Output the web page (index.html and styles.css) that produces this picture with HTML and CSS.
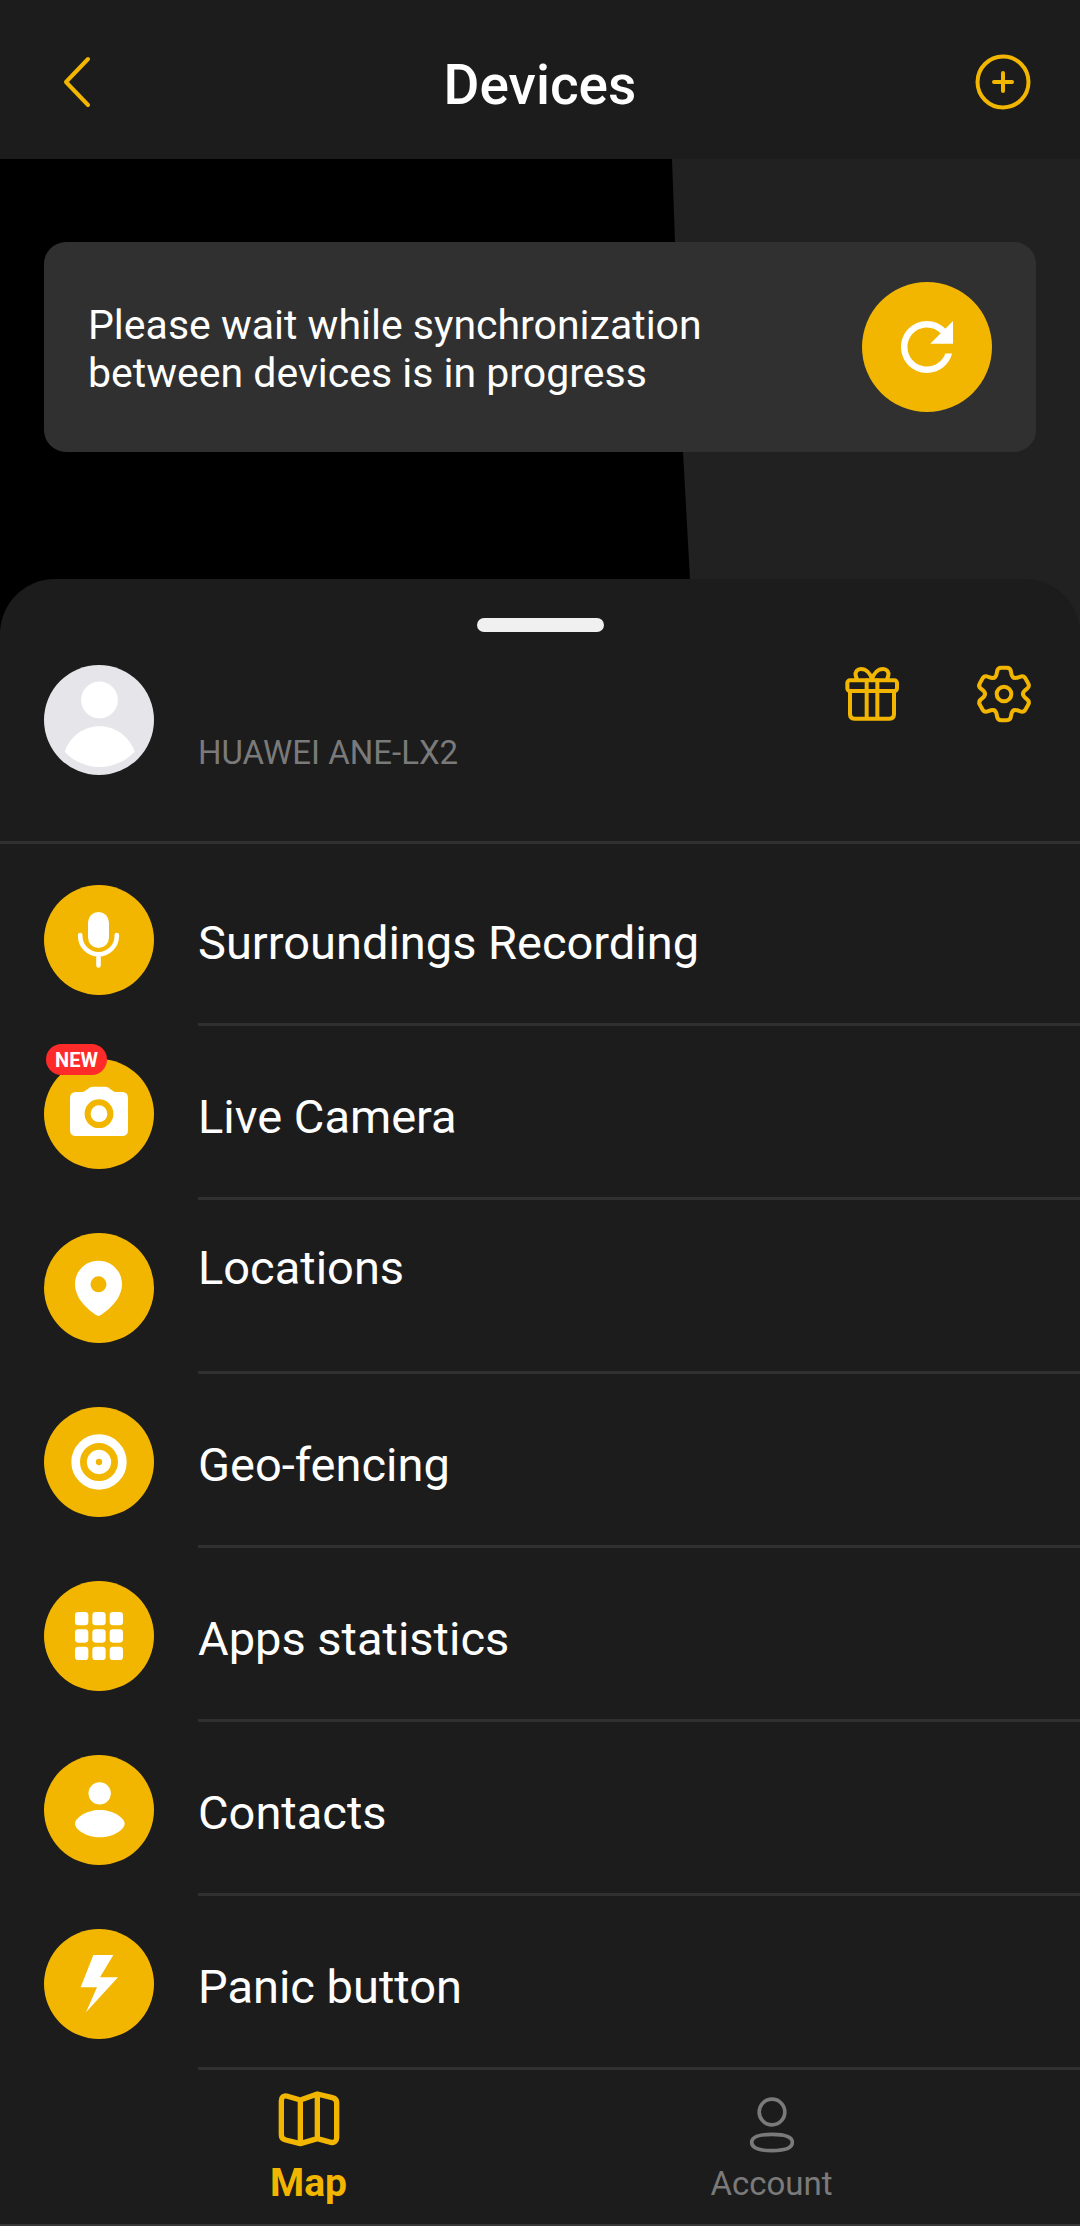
FILE: index.html
```html
<!DOCTYPE html>
<html lang="en">
<head>
  <meta charset="utf-8">
  <meta name="viewport" content="width=device-width, initial-scale=1">
  <title>Devices</title>
  <link rel="stylesheet" href="styles.css">
</head>
<body>
  <header class="topbar">
    <button class="icon-button" type="button" aria-label="Back">
      <svg class="topbar-icon" viewBox="0 0 60 60" aria-hidden="true">
        <path class="line" d="M43 7 L21 30 L43 53"/>
      </svg>
    </button>
    <h1 class="topbar-title">Devices</h1>
    <button class="icon-button" type="button" aria-label="Add device">
      <svg class="topbar-icon" viewBox="2 0 60 60" aria-hidden="true">
        <circle class="line" cx="30" cy="30" r="25.5"/>
        <path class="line" d="M30 21 V39 M21 30 H39"/>
      </svg>
    </button>
  </header>

  <main class="main">
    <section class="map">
      <svg class="map-tiles" viewBox="0 0 1080 475" preserveAspectRatio="none" aria-hidden="true">
        <path fill="#212121" d="M672 0 L675 83 L683 293 L690 420 L693 475 H1080 V0 Z"/>
      </svg>
      <div class="sync-card">
        <p class="sync-text">Please wait while synchronization between devices is in progress</p>
        <button class="sync-button" type="button" aria-label="Refresh">
          <svg class="sync-icon" viewBox="0 0 24 24" aria-hidden="true">
            <path fill="#fff" d="M17.65 6.35C16.2 4.9 14.21 4 12 4c-4.42 0-7.99 3.58-7.99 8s3.57 8 7.99 8c3.73 0 6.84-2.55 7.73-6h-2.08c-.82 2.33-3.04 4-5.65 4-3.31 0-6-2.69-6-6s2.69-6 6-6c1.66 0 3.14.69 4.22 1.78L13 11h7V4l-2.35 2.35z"/>
          </svg>
        </button>
      </div>
    </section>

    <section class="sheet">
      <div class="handle"></div>
      <div class="profile">
        <svg class="disc" viewBox="0 0 110 110" role="img" aria-label="Profile picture">
          <circle cx="55" cy="55" r="55" fill="#e5e5ea"/>
          <circle cx="55.5" cy="35" r="18.4" fill="#fff"/>
          <path fill="#fff" d="M20.7 86.7 C26 71 40 61.3 55.5 61.3 S85 71 90.7 86.7 C82 96 69 102 55.5 102 S29 96 20.7 86.7 Z"/>
        </svg>
        <p class="device-name">HUAWEI ANE-LX2</p>
        <div class="profile-actions">
          <button class="icon-button" type="button" aria-label="Gifts">
            <svg class="action-icon" viewBox="180 135 180 180" aria-hidden="true">
              <rect x="199" y="181" width="149" height="32" rx="8"/>
              <path d="M207 213 V283 Q207 296 220 296 H326 Q339 296 339 283 V213 M257 181 V296 M289 181 V296"/>
              <path d="M273 178 C268 160 255 147 240 147 C228 147 222 156 224 166 L228 179 M273 178 C278 160 291 147 306 147 C318 147 324 156 322 166 L318 179"/>
            </svg>
          </button>
          <button class="icon-button" type="button" aria-label="Settings">
            <svg class="action-icon" viewBox="-90 -87 180 180" aria-hidden="true">
              <defs>
                <path id="tooth" d="M-28.5 -49.4 C-22 -53 -22 -60 -21 -67 C-20 -75 -16 -79 -8 -79 L8 -79 C16 -79 20 -75 21 -67 C22 -60 22 -53 28.5 -49.4"/>
              </defs>
              <use href="#tooth"/>
              <use href="#tooth" transform="rotate(60)"/>
              <use href="#tooth" transform="rotate(120)"/>
              <use href="#tooth" transform="rotate(180)"/>
              <use href="#tooth" transform="rotate(240)"/>
              <use href="#tooth" transform="rotate(300)"/>
              <circle r="22"/>
            </svg>
          </button>
        </div>
      </div>

      <ul class="menu">
        <li>
          <a class="menu-item" href="#recording">
            <svg class="disc" viewBox="0 0 110 110" aria-hidden="true">
              <circle class="disc-fill" cx="55" cy="55" r="55"/>
              <rect x="44" y="27" width="21" height="36" rx="10.5" fill="#fff"/>
              <path d="M36.2 50 V51 A18.3 18.3 0 0 0 72.8 51 V50 M54.5 70 V80.5" fill="none" stroke="#fff" stroke-width="4.6" stroke-linecap="round"/>
            </svg>
            <span class="menu-label">Surroundings Recording</span>
          </a>
        </li>
        <li>
          <a class="menu-item" href="#camera">
            <span class="disc-wrap">
              <svg class="disc" viewBox="0 0 110 110" aria-hidden="true">
                <circle class="disc-fill" cx="55" cy="55" r="55"/>
                <path fill="#fff" d="M32 33 H38 C42 33 44 27.700 49 27.700 H61 C66 27.700 68 33 72 33 H78 Q84 33 84 39 V71 Q84 77 78 77 H32 Q26 77 26 71 V39 Q26 33 32 33 Z"/>
                <circle cx="55" cy="54.7" r="11.4" fill="none" stroke="#f2b600" stroke-width="6"/>
              </svg>
              <span class="badge">NEW</span>
            </span>
            <span class="menu-label">Live Camera</span>
          </a>
        </li>
        <li>
          <a class="menu-item menu-item-raised" href="#locations">
            <svg class="disc" viewBox="0 0 330 330" aria-hidden="true">
              <circle class="disc-fill" cx="165" cy="165" r="165"/>
              <path fill="#fff" d="M163.500 83 C124 83 93 114 93 153 C93 196 130 229 158 247 Q163.500 251 169 247 C197 229 234 196 234 153 C234 114 203 83 163.500 83 Z"/>
              <circle class="disc-fill" cx="163.500" cy="154" r="24"/>
            </svg>
            <span class="menu-label">Locations</span>
          </a>
        </li>
        <li>
          <a class="menu-item" href="#geofencing">
            <svg class="disc" viewBox="0 0 330 330" aria-hidden="true">
              <circle class="disc-fill" cx="165" cy="165" r="165"/>
              <circle cx="165" cy="165" r="70" fill="none" stroke="#fff" stroke-width="26"/>
              <circle cx="165" cy="165" r="23" fill="none" stroke="#fff" stroke-width="27"/>
            </svg>
            <span class="menu-label">Geo-fencing</span>
          </a>
        </li>
        <li>
          <a class="menu-item" href="#apps">
            <svg class="disc" viewBox="0 0 330 330" aria-hidden="true">
              <circle class="disc-fill" cx="165" cy="165" r="165"/>
              <g fill="#fff">
                <rect x="93" y="93" width="40" height="40" rx="10"/>
                <rect x="145" y="93" width="40" height="40" rx="10"/>
                <rect x="197" y="93" width="40" height="40" rx="10"/>
                <rect x="93" y="145" width="40" height="40" rx="10"/>
                <rect x="145" y="145" width="40" height="40" rx="10"/>
                <rect x="197" y="145" width="40" height="40" rx="10"/>
                <rect x="93" y="197" width="40" height="40" rx="10"/>
                <rect x="145" y="197" width="40" height="40" rx="10"/>
                <rect x="197" y="197" width="40" height="40" rx="10"/>
              </g>
            </svg>
            <span class="menu-label">Apps statistics</span>
          </a>
        </li>
        <li>
          <a class="menu-item" href="#contacts">
            <svg class="disc" viewBox="0 0 330 330" aria-hidden="true">
              <circle class="disc-fill" cx="165" cy="165" r="165"/>
              <circle cx="167" cy="115" r="33.5" fill="#fff"/>
              <path fill="#fff" d="M93 206 C93 190 125 165 167.500 165 S242 190 242 206 S210 247 167.500 247 S93 222 93 206 Z"/>
            </svg>
            <span class="menu-label">Contacts</span>
          </a>
        </li>
        <li>
          <a class="menu-item" href="#panic">
            <svg class="disc" viewBox="0 0 330 330" aria-hidden="true">
              <circle class="disc-fill" cx="165" cy="165" r="165"/>
              <path fill="#fff" d="M148 78 H208 L168 145 H222 L126 250 L159 175 H110 Z"/>
            </svg>
            <span class="menu-label">Panic button</span>
          </a>
        </li>
      </ul>
    </section>
  </main>

  <nav class="tabs">
    <a class="tab tab-active" href="#map" aria-current="page">
      <svg class="tab-icon" viewBox="765 618 198 216" aria-hidden="true">
        <path stroke-width="16" d="M838 660 L797 648 C788 646 781 652 781 662 V764 C781 772 786 778 794 780 L838 791 L889 776 L930 787 C940 789 947 783 947 773 V668 C947 660 942 655 934 653 L889 642 Z M838 660 V791 M889 642 V776"/>
      </svg>
      <span class="tab-label">Map</span>
    </a>
    <a class="tab" href="#account">
      <svg class="tab-icon" viewBox="294 108 198 216" aria-hidden="true">
        <circle stroke-width="11" cx="393" cy="186" r="38.5"/>
        <path stroke-width="11" d="M393 253 C432 253 454 260 454 277 C454 295 432 302 393 302 C354 302 332 295 332 277 C332 260 354 253 393 253 Z"/>
      </svg>
      <span class="tab-label">Account</span>
    </a>
  </nav>
</body>
</html>
```

FILE: styles.css
```css
:root {
  --bg: #1c1c1c;
  --accent: #f2b600;
  --card: #303030;
  --rule: #303030;
  --muted: #7a7a7a;
  --gutter: 44px;
}

* {
  box-sizing: border-box;
}

body {
  margin: 0;
  min-height: 100vh;
  display: flex;
  flex-direction: column;
  background: var(--bg);
  color: #fff;
  font-family: Roboto, "Liberation Sans", sans-serif;
}

svg {
  display: block;
  flex-shrink: 0;
}

a {
  color: inherit;
  text-decoration: none;
}

.icon-button {
  padding: 0;
  border: 0;
  background: none;
  color: var(--accent);
  cursor: pointer;
}

/* Top bar */

.topbar {
  display: flex;
  align-items: center;
  justify-content: space-between;
  height: 159px;
  padding: 5px 45px 0;
}

.topbar-icon {
  width: 60px;
  height: 60px;
}

.line {
  fill: none;
  stroke: currentColor;
  stroke-width: 4;
  stroke-linecap: round;
  stroke-linejoin: round;
}

.topbar-title {
  margin: 0;
  padding-top: 6px;
  font-size: 55px;
  font-weight: 500;
  line-height: 64px;
}

/* Map with the sync notice */

.map {
  display: grid;
  height: 475px;
  background: #000;
}

.map > * {
  grid-area: 1 / 1;
}

.map-tiles {
  width: 100%;
  height: 475px;
}

.sync-card {
  z-index: 1;
  align-self: start;
  display: flex;
  align-items: center;
  justify-content: space-between;
  gap: var(--gutter);
  min-height: 210px;
  margin: 83px var(--gutter) 0;
  padding: 0 var(--gutter);
  border-radius: 22px;
  background: var(--card);
}

.sync-text {
  max-width: 660px;
  margin: 0;
  padding-top: 3px;
  font-size: 41px;
  line-height: 48px;
}

.sync-button {
  display: grid;
  place-items: center;
  flex-shrink: 0;
  width: 130px;
  height: 130px;
  padding: 0;
  border: 0;
  border-radius: 50%;
  background: var(--accent);
  cursor: pointer;
}

.sync-icon {
  width: 78px;
  height: 78px;
}

/* Bottom sheet */

.sheet {
  position: relative;
  z-index: 2;
  margin-top: -55px;
  padding-top: 39px;
  border-radius: 55px 55px 0 0;
  background: var(--bg);
}

.handle {
  width: 127px;
  height: 14px;
  margin: 0 auto 33px;
  border-radius: 7px;
  background: #f0f0f0;
}

.disc {
  width: 110px;
  height: 110px;
}

.disc-fill {
  fill: var(--accent);
}

.profile {
  display: flex;
  gap: var(--gutter);
  padding: 0 46px 66px var(--gutter);
  border-bottom: 3px solid var(--rule);
}

.device-name {
  flex: 1;
  align-self: flex-end;
  margin: 0;
  color: var(--muted);
  font-size: 33px;
  line-height: 44px;
}

.profile-actions {
  display: flex;
  align-items: flex-start;
  gap: 73px;
}

.action-icon {
  width: 60px;
  height: 60px;
  fill: none;
  stroke: currentColor;
  stroke-width: 12;
  stroke-linecap: round;
  stroke-linejoin: round;
}

.menu {
  margin: 0;
  padding: 8px 0 0;
  list-style: none;
}

.menu-item {
  display: flex;
  gap: var(--gutter);
  padding-left: var(--gutter);
}

.menu-item > .disc,
.disc-wrap {
  margin: 33px 0 31px;
}

.disc-wrap {
  position: relative;
}

.menu-label {
  flex: 1;
  display: flex;
  align-items: center;
  padding-top: 10px;
  border-bottom: 3px solid var(--rule);
  font-size: 47px;
  line-height: 56px;
}

.menu-item-raised .menu-label {
  padding: 0 0 36px;
}

.badge {
  position: absolute;
  top: -15px;
  left: 2px;
  width: 61px;
  padding-top: 1px;
  border-radius: 16px;
  background: #ff2a2a;
  font-size: 20px;
  font-weight: 700;
  line-height: 30px;
  text-align: center;
}

/* Tab bar */

.tabs {
  display: flex;
  margin-top: auto;
  padding: 0 77px;
  border-bottom: 2px solid #363636;
}

.tab {
  flex: 1;
  display: flex;
  flex-direction: column;
  align-items: center;
  padding: 16px 0;
  color: var(--muted);
}

.tab-icon {
  width: 66px;
  height: 72px;
  fill: none;
  stroke: currentColor;
  stroke-linejoin: round;
}

.tab-label {
  padding-top: 2px;
  font-size: 33px;
  line-height: 48px;
}

.tab-active {
  color: var(--accent);
}

.tab-active .tab-label {
  padding-top: 0;
  font-size: 39px;
  font-weight: 700;
  line-height: 50px;
}
```
